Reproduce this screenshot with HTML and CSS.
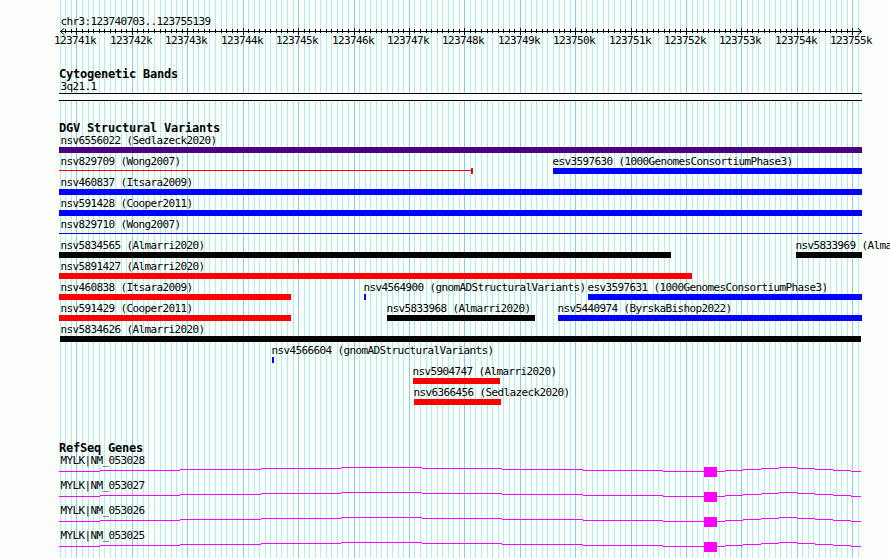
FILE: index.html
```html
<!DOCTYPE html>
<html lang="en">
<head>
  <meta charset="UTF-8" />
  <title>chr3:123740703..123755139</title>
  <link rel="stylesheet" href="styles.css">
</head>
<body>
  <main class="browser">
    <svg class="gridlines" id="gridlines" width="890" height="558"></svg>

    <section class="overview">
      <div class="label">chr3:123740703..123755139</div>
      <svg class="ruler" id="ruler" width="890" height="19"></svg>
    </section>

    <section class="track cytobands">
      <h2>Cytogenetic Bands</h2>
      <div class="label">3q21.1</div>
      <div class="band"></div>
    </section>

    <section class="track variants">
      <h2>DGV Structural Variants</h2>
      <div id="variants"></div>
    </section>

    <section class="track genes">
      <h2>RefSeq Genes</h2>
      <div id="genes"></div>
    </section>
  </main>

  <script src="tracks.js"></script>
</body>
</html>
```
FILE: styles.css
```css
* {
  box-sizing: border-box;
}
body {
  margin: 0;
  background: #fdfffc;
  color: #000;
  font-family: "DejaVu Sans Mono", monospace;
  overflow: hidden;
}
.browser {
  position: relative;
  width: 890px;
  height: 558px;
  padding-top: 15px;
  overflow: hidden;
}
.gridlines {
  position: absolute;
  top: 0;
  left: 0;
}
.gridlines .minor {
  fill: #afeeee;
}
.gridlines .major {
  fill: #87ceeb;
}
.overview, .track {
  position: relative;
}
.overview {
  height: 52px;
}
.label, .ruler text {
  font-size: 11px;
  letter-spacing: -0.622px;
}
.label {
  height: 13px;
  line-height: 13px;
  padding-left: 60.5px;
  white-space: pre;
}
.ruler {
  display: block;
}
h2 {
  height: 13px;
  margin: 0;
  padding-left: 59px;
  font-size: 12px;
  line-height: 15px;
  letter-spacing: -0.224px;
}
.cytobands {
  height: 54px;
}
.band {
  width: 803px;
  height: 8px;
  margin-left: 59px;
  border: solid #000;
  border-width: 1px 0;
  background: #fdfffc;
}
.variants {
  height: 320px;
}
.row {
  position: relative;
  height: 21px;
}
/* features sit at their genomic position inside the row */
.feature {
  position: absolute;
  top: 0;
}
.feature .label {
  padding-left: 0;
}
.bar {
  height: 6px;
}
.line {
  height: 6px;
  padding-top: 2px;
}
.line::before {
  content: "";
  display: block;
  height: 1px;
  background: currentColor;
}
.capped {
  border-right: 2px solid currentColor;
}
.indigo { color: #4b0082; }
.blue { color: #0000ff; }
.navy { color: #0000cc; }
.red { color: #ff0000; }
.black { color: #000; }
.bar {
  background: currentColor;
}
.gene {
  height: 25px;
}
.gene svg {
  display: block;
}
.gene path {
  fill: none;
  stroke: #ff00ff;
}
.gene rect {
  fill: #ff00ff;
}
```
FILE: tracks.js
```js
const START = 123740703;
const END = 123755139;
const LEFT = 60;
const WIDTH = 800;

function toX(pos) {
  return Math.round(LEFT + (pos - START) / (END - START + 1) * WIDTH);
}

// grid and ruler
let grid = '';
let ruler = '<rect x="60" y="3" width="802" height="1"/>' +
  '<path d="M64.5 0L60.5 3.5L64.5 7M857.5 0L861.5 3.5L857.5 7" fill="none" stroke="#000"/>';
for (let pos = 123740700; pos <= END; pos += 100) {
  const x = toX(pos);
  const major = pos % 1000 === 0;
  grid += `<rect class="${major ? 'major' : 'minor'}" x="${x}" y="0" width="1" height="558"/>`;
  if (major) {
    ruler += `<rect x="${x}" y="0" width="1" height="7"/>`;
    ruler += `<text x="${x - 22}" y="16">${pos / 1000}k</text>`;
  } else if (x > LEFT && x < 858) {
    ruler += `<rect x="${x}" y="1" width="1" height="4"/>`;
  }
}
document.getElementById('gridlines').innerHTML = grid;
document.getElementById('ruler').innerHTML = ruler;

// [name, start px, end px, colour, shape]
const variants = [
  [['nsv6556022 (Sedlazeck2020)', 59, 862, 'indigo', 'bar']],
  [['nsv829709 (Wong2007)', 59, 473, 'red', 'line capped'],
   ['esv3597630 (1000GenomesConsortiumPhase3)', 553, 862, 'blue', 'bar']],
  [['nsv460837 (Itsara2009)', 59, 862, 'blue', 'bar']],
  [['nsv591428 (Cooper2011)', 59, 862, 'blue', 'bar']],
  [['nsv829710 (Wong2007)', 59, 862, 'navy', 'line']],
  [['nsv5834565 (Almarri2020)', 59, 671, 'black', 'bar'],
   ['nsv5833969 (Almarri2020)', 796, 862, 'black', 'bar']],
  [['nsv5891427 (Almarri2020)', 59, 692, 'red', 'bar']],
  [['nsv460838 (Itsara2009)', 59, 291, 'red', 'bar'],
   ['nsv4564900 (gnomADStructuralVariants)', 364, 366, 'blue', 'bar'],
   ['esv3597631 (1000GenomesConsortiumPhase3)', 588, 862, 'blue', 'bar']],
  [['nsv591429 (Cooper2011)', 59, 291, 'red', 'bar'],
   ['nsv5833968 (Almarri2020)', 387, 535, 'black', 'bar'],
   ['nsv5440974 (ByrskaBishop2022)', 558, 862, 'blue', 'bar']],
  [['nsv5834626 (Almarri2020)', 60, 861, 'black', 'bar']],
  [['nsv4566604 (gnomADStructuralVariants)', 272, 274, 'blue', 'bar']],
  [['nsv5904747 (Almarri2020)', 413, 500, 'red', 'bar']],
  [['nsv6366456 (Sedlazeck2020)', 414, 501, 'red', 'bar']]
];

document.getElementById('variants').innerHTML = variants.map(row => {
  const features = row.map(([name, from, to, colour, shape]) => {
    const indent = Math.max(60.5, from - 0.5) - from;
    return `<div class="feature" style="left: ${from}px; width: ${to - from}px">
      <div class="label" style="margin-left: ${indent}px">${name}</div>
      <div class="${shape} ${colour}"></div>
    </div>`;
  });
  return `<div class="row">${features.join('')}</div>`;
}).join('');

// introns are shallow hats, drawn as one pixel steps: [from, to, y]
const steps = [
  [59, 100, 4], [100, 180, 3], [180, 261, 2], [261, 341, 1], [341, 422, 0],
  [422, 502, 1], [502, 583, 2], [583, 663, 3], [663, 704, 4],
  [717, 725, 4], [725, 743, 3], [743, 761, 2], [761, 779, 1], [779, 797, 0],
  [797, 815, 1], [815, 833, 2], [833, 851, 3], [851, 861, 4]
];
const introns = steps.map(([a, b, y]) => `M${a} ${y + 0.5}H${b}`).join('');
const genes = ['MYLK|NM_053028', 'MYLK|NM_053027', 'MYLK|NM_053026', 'MYLK|NM_053025'];

document.getElementById('genes').innerHTML = genes.map(name => `
  <div class="gene">
    <div class="label">${name}</div>
    <svg width="890" height="12">
      <path d="${introns}"/>
      <rect x="704" y="0" width="13" height="10"/>
    </svg>
  </div>`).join('');
```
